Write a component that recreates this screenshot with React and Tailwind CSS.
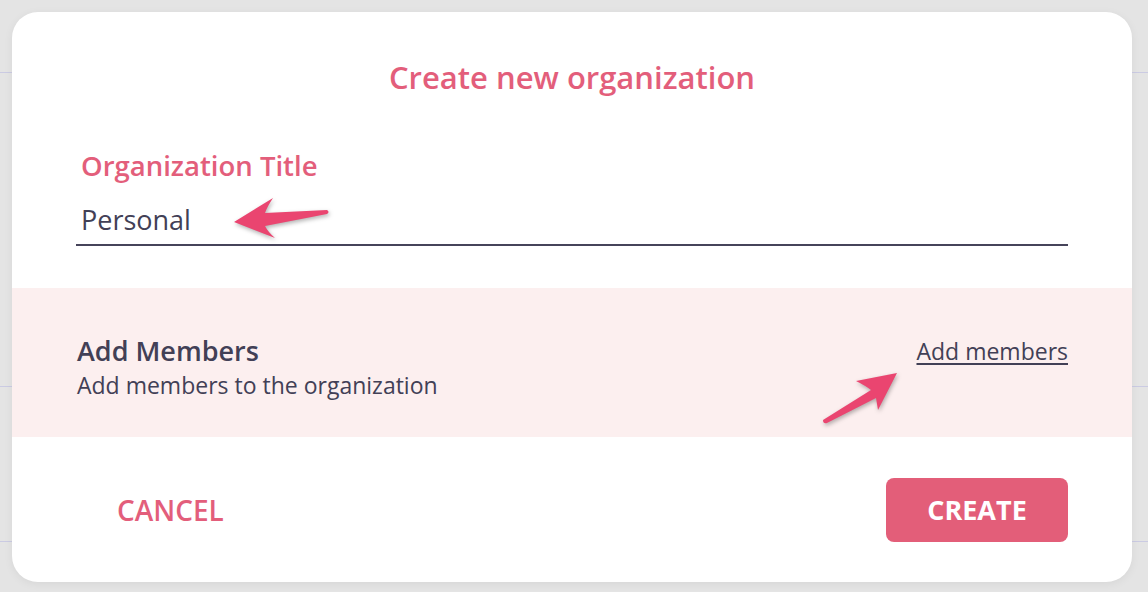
export default function App() {
  return (
    <div className="relative h-[592px] w-[1148px] overflow-hidden bg-[#e4e4e4]" style={{ fontFamily: '"Open Sans", "Noto Sans", sans-serif' }}>
      {/* page behind the modal */}
      <div className="flex flex-col" aria-hidden="true">
        <div className="h-[72px]" />
        <div className="h-px bg-[#cbcbe3]" />
        <div className="h-[313px]" />
        <div className="h-px bg-[#cbcbe3]" />
        <div className="h-[154px]" />
        <div className="h-px bg-[#cbcbe3]" />
      </div>

      <div className="absolute left-[12px] top-[12px] w-[1120px] rounded-[26px] bg-white shadow-[0_2px_10px_rgba(0,0,0,0.06)]">
        <div className="px-16 pt-[47px]">
          <h2 className="text-center text-[31px] leading-9 font-semibold text-[#e35e7b]">Create new organization</h2>

          <label className="mt-[55px] block pl-[5px] text-[27.5px] leading-8 font-semibold text-[#e35e7b]">Organization Title</label>
          <div className="mt-[22px] border-b-2 border-[#46445a] pb-2 pl-[5px] text-[27px] leading-8 text-[#424056]">Personal</div>
        </div>

        <div className="mt-[42px] flex items-start justify-between bg-[#fcefef] px-16 pt-[47px] pb-[38px]">
          <div className="pl-px text-[#424056]">
            <div className="text-[27px] leading-8 font-semibold">Add Members</div>
            <div className="mt-[4px] text-[23px] leading-7">Add members to the organization</div>
          </div>
          <a href="#" className="mt-[2px] text-[23px] leading-7 text-[#424056] underline decoration-[1.5px] underline-offset-[3px]">Add members</a>
        </div>

        <div className="flex items-center justify-between px-16 pt-[41px] pb-[40px]">
          <button className="px-[41px] text-[28px] leading-8 font-semibold text-[#e35e7b]">CANCEL</button>
          <button className="h-16 w-[182px] rounded-lg bg-[#e35e79] text-[27px] font-bold text-white">CREATE</button>
        </div>

        {/* annotation arrows */}
        <svg className="absolute left-[213px] top-[178px] drop-shadow-[1px_2px_2px_rgba(0,0,0,0.3)]" width="120" height="66" viewBox="225 190 120 66">
          <path d="M234 222 L273 198 Q267 207 265 213 L327 210 Q330 212 327 214 L265 226 Q268 232 275 238 Z" fill="#ea4570" />
        </svg>
        <svg className="absolute left-[808px] top-[358px] drop-shadow-[1px_2px_2px_rgba(0,0,0,0.3)]" width="96" height="72" viewBox="820 370 96 72">
          <path d="M897 373 L856 381 Q866 386 871 390 L823 420 Q823 424 827 423 L876 398 Q877 404 878 410 Z" fill="#ea4570" />
        </svg>
      </div>
    </div>
  )
}
